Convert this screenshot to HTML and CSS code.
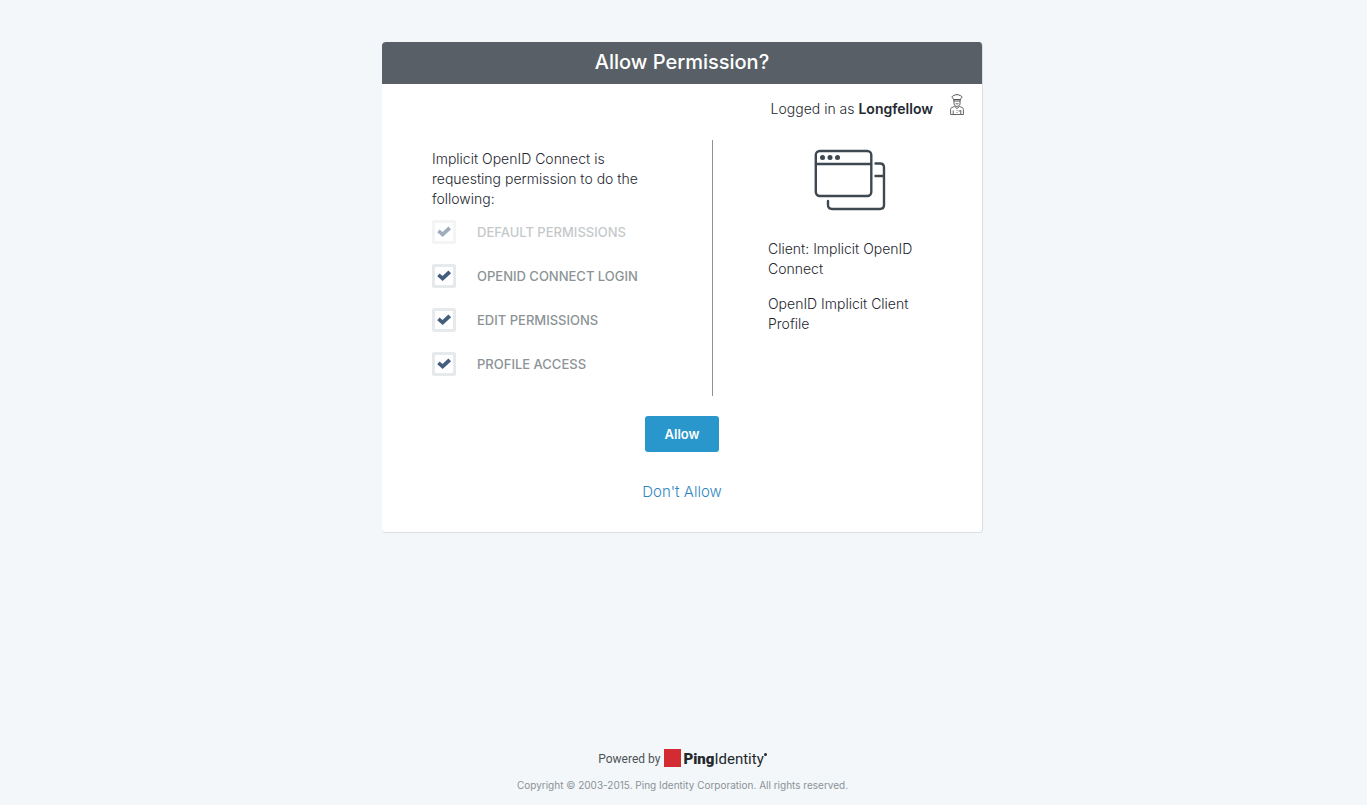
FILE: index.html
```html
<!DOCTYPE html>
<html lang="en">
<head>
<meta charset="utf-8">
<meta name="viewport" content="width=device-width, initial-scale=1">
<title>Allow Permission?</title>
<link rel="stylesheet" href="styles.css">
</head>
<body>
<svg class="sprite" aria-hidden="true"><symbol id="tick" viewBox="0 0 24 24"><path d="M5.2 12.200 7.600 9.500l2.900 2.600 5.900-5.600 2.700 2.700-8.400 7.800z"/></symbol></svg>
<main class="card">
  <h1 class="card-title">Allow Permission?</h1>
  <div class="user">
    <span>Logged in as <strong>Longfellow</strong></span>
    <svg class="avatar" viewBox="0 0 14 21" width="14" height="21" fill="none" stroke="#555" aria-hidden="true">
      <path d="M3.800 7V5C1.500 4.400 1.700 1.500 4 1.600 5 .3 9 .3 10 1.600c2.300-.1 2.500 2.800.2 3.400v2zM3.800 5.500h6.400"/>
      <path d="M4 7v3C4.500 13.200 9.500 13.200 10 10V7M5.500 9.800h3" stroke-width=".9"/>
      <path d="M4.500 12.500 1.600 13.600Q.6 14 .6 15.500v5h12.800v-5q0-1.500-1-1.900l-2.900-1.100M4.500 12.500 7 14.500l2.500-2M3.200 16.500v4M10.800 16v4M8.500 17h2M7 16v.8M7 18.200v.8" stroke-width=".9"/>
    </svg>
  </div>
  <form class="form">
    <div class="columns">
      <section class="permissions">
        <p class="intro">Implicit OpenID Connect is requesting permission to do the following:</p>
        <label class="option option-disabled"><span class="check"><input type="checkbox" checked disabled><svg><use href="#tick"/></svg></span>DEFAULT PERMISSIONS</label>
        <label class="option"><span class="check"><input type="checkbox" checked><svg><use href="#tick"/></svg></span>OPENID CONNECT LOGIN</label>
        <label class="option"><span class="check"><input type="checkbox" checked><svg><use href="#tick"/></svg></span>EDIT PERMISSIONS</label>
        <label class="option"><span class="check"><input type="checkbox" checked><svg><use href="#tick"/></svg></span>PROFILE ACCESS</label>
      </section>
      <section class="client">
        <svg class="client-icon" viewBox="0 0 72 62" width="72" height="62" fill="none" stroke="#3e4850" stroke-width="2.400" stroke-linecap="round" aria-hidden="true">
          <rect x="1.800" y="2" width="55.500" height="45" rx="4"/>
          <path d="M2 15h55M61.500 14.500H66q4 0 4 4V56q0 4-4 4H18q-4 0-4-4v-4M61.500 27H70"/>
          <g fill="#3e4850" stroke="none"><circle cx="8.500" cy="8.500" r="2.500"/><circle cx="16" cy="8.500" r="2.500"/><circle cx="23.500" cy="8.500" r="2.500"/></g>
        </svg>
        <p>Client: Implicit OpenID Connect</p>
        <p>OpenID Implicit Client Profile</p>
      </section>
    </div>
    <div class="actions">
      <button class="allow" type="submit">Allow</button>
      <a class="deny" href="#deny">Don't Allow</a>
    </div>
  </form>
</main>
<footer class="footer">
  <div class="powered">
    <span>Powered by</span>
    <span class="brand"><span class="brand-square"></span><span class="brand-name"><b>Ping</b>Identity</span><span class="brand-mark"></span></span>
  </div>
  <p class="copyright">Copyright © 2003-2015. Ping Identity Corporation. All rights reserved.</p>
</footer>
</body>
</html>
```
FILE: styles.css
```css
* { box-sizing: border-box; }
body {
  margin: 0;
  padding: 42px 2px 10px 0;
  min-height: 100vh;
  display: flex;
  flex-direction: column;
  align-items: center;
  background: #f3f7fa;
  color: #24282f;
  font: 300 14px/20px Inter, "Liberation Sans", sans-serif;
}
p { margin: 0; }
.sprite { position: absolute; width: 0; height: 0; }
.card {
  width: 100%;
  max-width: 601px;
  background: #fff;
  border: solid #dadee1;
  border-width: 0 1px 1px 0;
  border-radius: 4px;
  overflow: hidden;
}
.card-title {
  margin: 0;
  padding: 6px 0 8px;
  background: #585f66;
  color: #fff;
  font-size: 20px;
  line-height: 28px;
  font-weight: 500;
  text-align: center;
}
.user {
  display: flex;
  justify-content: flex-end;
  align-items: center;
  gap: 17px;
  height: 56px;
  padding: 0 18px 6px 0;
}
.user strong { font-weight: 600; }
.avatar { margin-bottom: 10px; }
.columns { display: grid; grid-template-columns: 331fr 269fr; }
.permissions {
  padding: 9px 60px 8px 50px;
  border-right: 1px solid #8b9298;
}
.intro { margin-bottom: 11px; }
.option {
  display: flex;
  align-items: center;
  gap: 21px;
  height: 24px;
  margin-bottom: 20px;
  color: #8b9396;
  font-size: 13px;
  font-weight: 500;
  white-space: nowrap;
}
.option:last-child { margin-bottom: 12px; }
.option-disabled { opacity: .5; }
.check { display: grid; }
.check input, .check svg { grid-area: 1 / 1; width: 24px; height: 24px; margin: 0; }
.check input {
  appearance: none;
  border: 3px solid #e6eaed;
  border-radius: 2px;
  background: #fff;
}
.check svg { fill: #455d7d; pointer-events: none; }
.client { padding: 9px 50px 0 55px; }
.client-icon { display: block; margin: 0 auto 28px; }
.client p { margin-bottom: 15px; }
.actions {
  display: flex;
  flex-direction: column;
  align-items: center;
  gap: 30px;
  padding: 20px 0 30px;
}
.allow {
  height: 36px;
  padding: 0 20px;
  border: 0;
  border-radius: 3px;
  background: #2996cc;
  color: #fff;
  font: 600 13px/20px Inter, "Liberation Sans", sans-serif;
}
.deny { color: #2f86c1; font-size: 15px; text-decoration: none; }
.footer {
  margin-top: auto;
  display: flex;
  flex-direction: column;
  align-items: center;
  gap: 6px;
}
.powered {
  display: flex;
  align-items: center;
  gap: 4px;
  height: 20px;
  color: #4e5357;
  font: 400 12px/20px Roboto, sans-serif;
}
.brand { display: flex; align-items: center; gap: 2px; }
.brand-square { width: 17px; height: 18px; background: #d22b31; margin-bottom: 2px; }
.brand-name { font: 400 15px/20px Roboto, sans-serif; color: #25282b; }
.brand-name b { font-weight: 900; }
.brand-mark { width: 3px; height: 3px; margin: 0 0 10px -2px; border-radius: 50%; background: #25282b; }
.copyright { color: #8b9296; font-size: 10px; line-height: 20px; font-weight: 400; }
```
